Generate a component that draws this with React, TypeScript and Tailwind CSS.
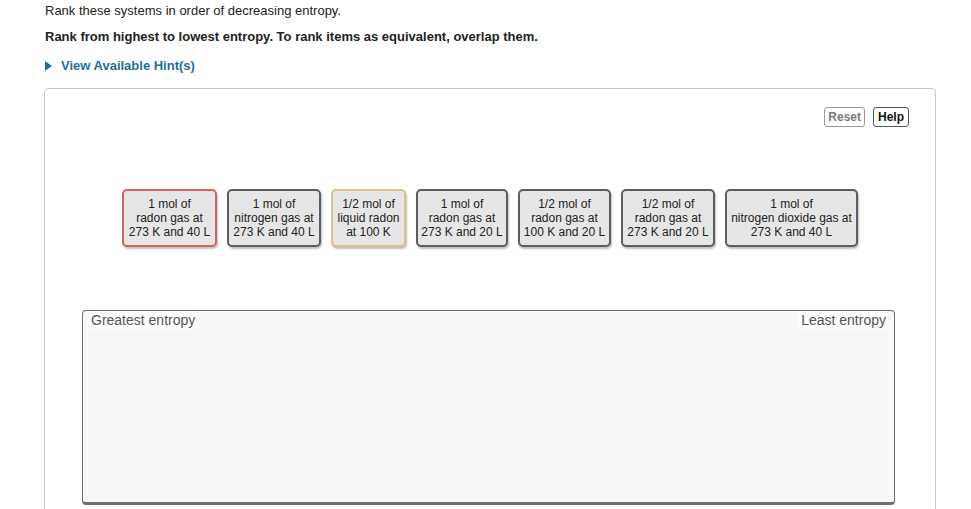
import React from 'react'

// Ranking task: drag cards into the drop zone

type Item = { lines: string[]; w: string; tone: 'red' | 'tan' | 'plain' }

const items: Item[] = [
  { lines: ['1 mol of', 'radon gas at', '273 K and 40 L'], w: 'w-[95px]', tone: 'red' },
  { lines: ['1 mol of', 'nitrogen gas at', '273 K and 40 L'], w: 'w-[94px]', tone: 'plain' },
  { lines: ['1/2 mol of', 'liquid radon', 'at 100 K'], w: 'w-[75px]', tone: 'tan' },
  { lines: ['1 mol of', 'radon gas at', '273 K and 20 L'], w: 'w-[92px]', tone: 'plain' },
  { lines: ['1/2 mol of', 'radon gas at', '100 K and 20 L'], w: 'w-[93px]', tone: 'plain' },
  { lines: ['1/2 mol of', 'radon gas at', '273 K and 20 L'], w: 'w-[94px]', tone: 'plain' },
  { lines: ['1 mol of', 'nitrogen dioxide gas at', '273 K and 40 L'], w: 'w-[133px]', tone: 'plain' },
]

const toneBorder = {
  red: 'border-[#d4655c]',
  tan: 'border-[#dfc08e]',
  plain: 'border-[#5c5c68]',
}

function Card({ item }: { item: Item }) {
  return (
    <div
      className={`${item.w} h-[58px] rounded-[5px] border-2 ${toneBorder[item.tone]} bg-[#e6e6e6] shadow-[1px_2px_2px_rgba(0,0,0,0.25)] flex flex-col items-center justify-center text-[12px] leading-[14px] text-[#222] whitespace-nowrap`}
    >
      {item.lines.map((l) => (
        <span key={l}>{l}</span>
      ))}
    </div>
  )
}

export default function App() {
  return (
    <div className="w-[971px] h-[509px] overflow-hidden bg-white font-['Liberation_Sans',Arial,sans-serif] text-[#222]">
      <div className="pl-[45px] pt-[3px]">
        <p className="text-[13px] leading-[16px]">Rank these systems in order of decreasing entropy.</p>
        <p className="mt-[10px] text-[13px] leading-[16px] font-bold">
          Rank from highest to lowest entropy. To rank items as equivalent, overlap them.
        </p>
        <div className="mt-[13px] flex items-center gap-[9px] text-[13px] leading-[16px] font-bold text-[#1f6f99]">
          <svg width="7" height="10" viewBox="0 0 7 10">
            <path d="M0 0 L7 5 L0 10 Z" fill="#1f6f99" />
          </svg>
          <span>View Available Hint(s)</span>
        </div>
      </div>

      <div className="ml-[44px] mt-[14px] w-[892px] h-[440px] rounded-t-[5px] border border-b-0 border-[#c4c4c4]">
        <div className="flex justify-end gap-[8px] pt-[18px] pr-[26px]">
          <button className="h-[20px] px-[3px] rounded-[3px] border border-[#999] text-[12px] font-bold text-[#7a7a7a] leading-[18px]">
            Reset
          </button>
          <button className="h-[20px] px-[4px] rounded-[3px] border border-[#555] text-[12px] font-bold text-[#111] leading-[18px]">
            Help
          </button>
        </div>

        <div className="mt-[62px] flex justify-center gap-[10px]">
          {items.map((it, i) => (
            <Card key={i} item={it} />
          ))}
        </div>

        <div className="mt-[63px] ml-[37px] w-[813px] h-[195px] rounded-[4px] border-[1.5px] border-b-[3px] border-[#6e6e78] bg-[#f7f7f7] flex justify-between items-start">
          <span className="ml-[6px] px-[2px] bg-[#fcfcfc] text-[14px] leading-[18px] text-[#555]">Greatest entropy</span>
          <span className="mr-[6px] px-[2px] bg-[#fcfcfc] text-[14px] leading-[18px] text-[#555]">Least entropy</span>
        </div>
      </div>
    </div>
  )
}
